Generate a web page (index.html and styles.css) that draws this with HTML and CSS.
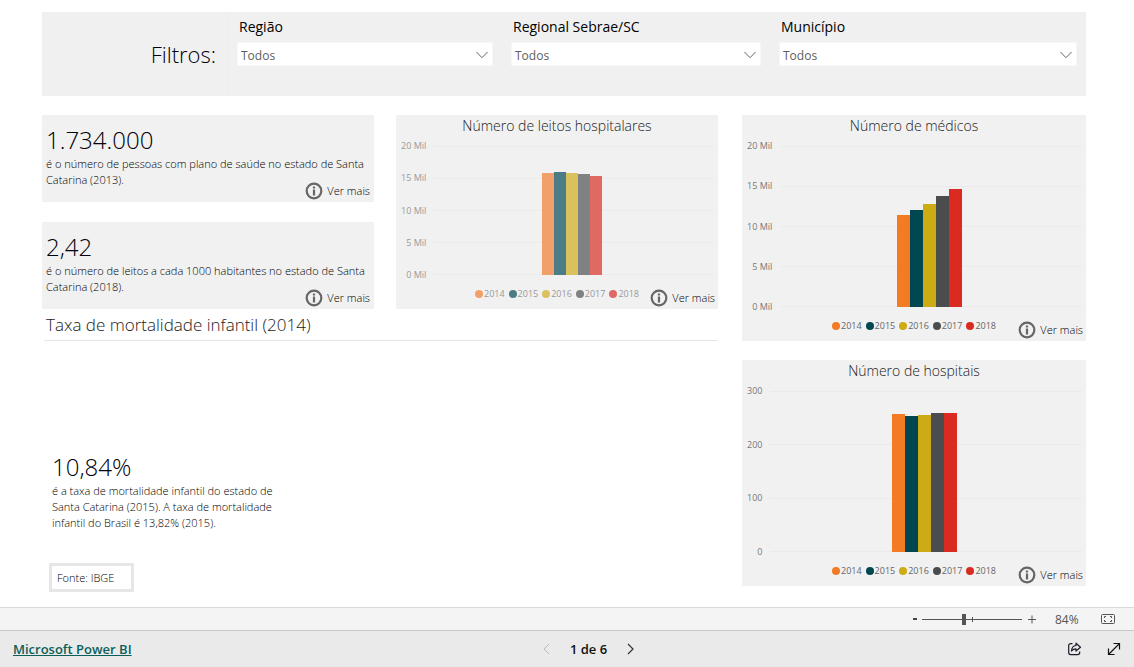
FILE: index.html
```html
<!DOCTYPE html>
<html lang="pt-BR">
<head>
<meta charset="utf-8">
<meta name="viewport" content="width=device-width, initial-scale=1">
<title>Saúde em Santa Catarina</title>
<link rel="stylesheet" href="styles.css">
</head>
<body>
<svg class="sprite" aria-hidden="true">
  <symbol id="info" viewBox="0 0 18 18">
    <circle cx="9" cy="9" r="7.3" fill="none" stroke="#666" stroke-width="2.2"/>
    <path d="M9 4.400v2M9 7.400v6" stroke="#666" stroke-width="2.2"/>
  </symbol>
  <symbol id="chevron" viewBox="0 0 14 8">
    <path d="M1.500 1l5.500 5.700L12.500 1" fill="none" stroke="currentColor"/>
  </symbol>
</svg>

<main class="report">
  <section class="filters">
    <h2 class="filters-title">Filtros:</h2>
    <div class="filters-list">
      <div class="filter">
        <label for="regiao">Região</label>
        <div class="select-box"><select id="regiao"><option>Todos</option></select><svg class="chevron"><use href="#chevron"/></svg></div>
      </div>
      <div class="filter">
        <label for="regional">Regional Sebrae/SC</label>
        <div class="select-box"><select id="regional"><option>Todos</option></select><svg class="chevron"><use href="#chevron"/></svg></div>
      </div>
      <div class="filter">
        <label for="municipio">Município</label>
        <div class="select-box"><select id="municipio"><option>Todos</option></select><svg class="chevron"><use href="#chevron"/></svg></div>
      </div>
    </div>
  </section>

  <div class="columns">
    <div class="column-main">
      <div class="top-row">
        <div class="kpis">
          <article class="card kpi">
            <p class="kpi-value">1.734.000</p>
            <p class="kpi-text">é o número de pessoas com plano de saúde no estado de Santa Catarina (2013).</p>
            <button class="more" type="button"><svg class="info"><use href="#info"/></svg>Ver mais</button>
          </article>
          <article class="card kpi">
            <p class="kpi-value">2,42</p>
            <p class="kpi-text">é o número de leitos a cada 1000 habitantes no estado de Santa Catarina (2018).</p>
            <button class="more" type="button"><svg class="info"><use href="#info"/></svg>Ver mais</button>
          </article>
        </div>

        <article class="card chart chart-muted">
          <h3 class="chart-title">Número de leitos hospitalares</h3>
          <div class="chart-body">
            <div class="axis"><span>20 Mil</span><span>15 Mil</span><span>10 Mil</span><span>5 Mil</span><span>0 Mil</span></div>
            <div class="plot">
              <div class="lines"><i></i><i></i><i></i><i></i><i></i></div>
              <div class="bars">
                <div class="bar y2014" style="height:79%"></div>
                <div class="bar y2015" style="height:80%"></div>
                <div class="bar y2016" style="height:79%"></div>
                <div class="bar y2017" style="height:78%"></div>
                <div class="bar y2018" style="height:77%"></div>
              </div>
            </div>
          </div>
          <div class="chart-foot">
            <ul class="legend"><li><i class="y2014"></i>2014</li><li><i class="y2015"></i>2015</li><li><i class="y2016"></i>2016</li><li><i class="y2017"></i>2017</li><li><i class="y2018"></i>2018</li></ul>
            <button class="more" type="button"><svg class="info"><use href="#info"/></svg>Ver mais</button>
          </div>
        </article>
      </div>

      <section class="mortality">
        <h2 class="mortality-title">Taxa de mortalidade infantil (2014)</h2>
        <div class="mortality-body">
          <p class="kpi-value">10,84%</p>
          <p class="kpi-text">é a taxa de mortalidade infantil do estado de Santa Catarina (2015). A taxa de mortalidade infantil do Brasil é 13,82% (2015).</p>
        </div>
        <p class="source">Fonte: IBGE</p>
      </section>
    </div>

    <div class="column-side">
      <article class="card chart">
        <h3 class="chart-title">Número de médicos</h3>
        <div class="chart-body">
          <div class="axis"><span>20 Mil</span><span>15 Mil</span><span>10 Mil</span><span>5 Mil</span><span>0 Mil</span></div>
          <div class="plot">
            <div class="lines"><i></i><i></i><i></i><i></i><i></i></div>
            <div class="bars">
              <div class="bar y2014" style="height:57%"></div>
              <div class="bar y2015" style="height:60.500%"></div>
              <div class="bar y2016" style="height:64%"></div>
              <div class="bar y2017" style="height:69%"></div>
              <div class="bar y2018" style="height:73%"></div>
            </div>
          </div>
        </div>
        <div class="chart-foot">
          <ul class="legend"><li><i class="y2014"></i>2014</li><li><i class="y2015"></i>2015</li><li><i class="y2016"></i>2016</li><li><i class="y2017"></i>2017</li><li><i class="y2018"></i>2018</li></ul>
          <button class="more" type="button"><svg class="info"><use href="#info"/></svg>Ver mais</button>
        </div>
      </article>

      <article class="card chart">
        <h3 class="chart-title">Número de hospitais</h3>
        <div class="chart-body">
          <div class="axis"><span>300</span><span>200</span><span>100</span><span>0</span></div>
          <div class="plot">
            <div class="lines"><i></i><i></i><i></i><i></i></div>
            <div class="bars">
              <div class="bar y2014" style="height:86%"></div>
              <div class="bar y2015" style="height:84.500%"></div>
              <div class="bar y2016" style="height:85%"></div>
              <div class="bar y2017" style="height:86.500%"></div>
              <div class="bar y2018" style="height:86.500%"></div>
            </div>
          </div>
        </div>
        <div class="chart-foot">
          <ul class="legend"><li><i class="y2014"></i>2014</li><li><i class="y2015"></i>2015</li><li><i class="y2016"></i>2016</li><li><i class="y2017"></i>2017</li><li><i class="y2018"></i>2018</li></ul>
          <button class="more" type="button"><svg class="info"><use href="#info"/></svg>Ver mais</button>
        </div>
      </article>
    </div>
  </div>
</main>

<div class="zoom-bar">
  <button class="icon-button" type="button" aria-label="Reduzir"><svg width="10" height="16" viewBox="0 0 10 16"><path d="M3 8h4" stroke="#444" stroke-width="2"/></svg></button>
  <input class="zoom-range" type="range" min="0" max="100" value="42" aria-label="Zoom">
  <button class="icon-button" type="button" aria-label="Ampliar"><svg width="20" height="16" viewBox="0 0 20 16"><path d="M6 8.500h8M10 4.500v8" stroke="#555" fill="none"/></svg></button>
  <span class="zoom-value">84%</span>
  <button class="icon-button" type="button" aria-label="Ajustar à página"><svg width="16" height="16" viewBox="0 0 16 16" fill="none" stroke="#555"><rect x="1.500" y="3.500" width="13" height="9" rx="1"/><path d="M6 5.500H4.500V7M10 5.500h1.500V7M6 10.500H4.500V9M10 10.500h1.500V9"/></svg></button>
</div>

<footer class="footer">
  <a class="brand" href="#">Microsoft Power BI</a>
  <nav class="pager" aria-label="Páginas">
    <button class="icon-button" type="button" aria-label="Página anterior" disabled><svg width="10" height="12" viewBox="0 0 10 12"><path d="M7 1L2 6l5 5" fill="none" stroke="#bbb"/></svg></button>
    <span>1 de 6</span>
    <button class="icon-button" type="button" aria-label="Próxima página"><svg width="10" height="12" viewBox="0 0 10 12"><path d="M3 1l5 5-5 5" fill="none" stroke="#333" stroke-width="1.200"/></svg></button>
  </nav>
  <div class="actions">
    <button class="icon-button" type="button" aria-label="Compartilhar"><svg width="16" height="16" viewBox="0 0 16 16" fill="none" stroke="#211a28" stroke-width="1.200"><path d="M6.500 2.600H4.700a2 2 0 0 0-2 2v7a2 2 0 0 0 2 2h7a2 2 0 0 0 2-2V10.500"/><path d="M10 2.200l4.500 4L10 10V7.900C8 7.900 6.700 8.500 5.500 10 5.700 6.800 7.300 4.700 10 4.500z" stroke-linejoin="round"/></svg></button>
    <button class="icon-button" type="button" aria-label="Tela cheia"><svg width="16" height="16" viewBox="0 0 16 16" fill="none" stroke="#111" stroke-width="1.200"><path d="M2.500 13.500l11-11M7.500 2.500h6v6M8.500 13.500h-6v-6"/></svg></button>
  </div>
</footer>
</body>
</html>
```
FILE: styles.css
```css
* {
  box-sizing: border-box;
}

body {
  margin: 0;
  min-height: 100vh;
  display: flex;
  flex-direction: column;
  background: #fff;
  color: #000;
  font-family: "Open Sans", "Noto Sans", sans-serif;
  font-size: 11px;
}

h2, h3, p, ul {
  margin: 0;
  padding: 0;
  font-weight: 300;
}

button {
  padding: 0;
  border: 0;
  background: none;
  color: inherit;
  font: inherit;
}

svg {
  display: block;
}

.sprite {
  position: absolute;
  width: 0;
  height: 0;
}

.report {
  flex: 1;
  padding: 12px 48px 21px 42px;
}

/* Filters */
.filters {
  display: grid;
  grid-template-columns: 186px 1fr;
  min-height: 84px;
  margin-bottom: 19px;
  background: #f0f0f0;
}

.filters-title {
  align-self: center;
  padding-right: 11px;
  border-right: 1px solid #ededed;
  color: #00000a;
  font-size: 22px;
  line-height: 84px;
  text-align: right;
}

.filters-list {
  display: grid;
  grid-template-columns: 256fr 250fr 298fr;
  gap: 18px;
  padding: 5px 9px 0;
}

.filter label {
  display: block;
  padding-left: 2px;
  color: #000;
  font-size: 14px;
  line-height: 20px;
}

.select-box {
  display: grid;
  align-items: center;
  margin-top: 5px;
  background: #fff;
}

.select-box > * {
  grid-area: 1 / 1;
}

.select-box select {
  appearance: none;
  width: 100%;
  height: 24px;
  padding: 3px 3px 0;
  border: 1px solid #f7f7f7;
  background: transparent;
  color: #605e5c;
  font: 400 12px "Open Sans", "Noto Sans", sans-serif;
}

.chevron {
  justify-self: end;
  width: 14px;
  height: 8px;
  margin: 2px 4px 0 0;
  color: #666;
  pointer-events: none;
}

/* Report grid */
.columns {
  display: grid;
  grid-template-columns: 676fr 344fr;
  gap: 24px;
}

.column-main, .column-side, .kpis {
  display: flex;
  flex-direction: column;
}

.column-side {
  gap: 19px;
}

.top-row {
  display: grid;
  grid-template-columns: 332fr 322fr;
  gap: 22px;
}

.kpis {
  gap: 20px;
}

.card {
  display: flex;
  flex-direction: column;
  background: #f1f1f1;
}

.kpi {
  height: 87px;
  padding: 9px 4px 2px;
}

.kpi-value {
  color: #00000a;
  font-size: 24px;
  line-height: 32px;
}

.kpi-text {
  font-size: 11px;
  line-height: 16px;
}

.kpi .kpi-text {
  height: 24px;
}

.more {
  display: flex;
  align-items: center;
  align-self: flex-end;
  gap: 4px;
  font-size: 11px;
  font-weight: 300;
  line-height: 18px;
  white-space: nowrap;
}

.kpi .more {
  margin-top: auto;
}

.info {
  width: 18px;
  height: 18px;
}

/* Charts */
.chart-title {
  color: #1a1a1a;
  font-size: 14px;
  line-height: 22px;
  text-align: center;
}

.chart-body {
  display: grid;
  grid-template-columns: auto 1fr;
  gap: 8px;
  height: 139px;
  margin-top: 4px;
  padding: 0 4px 0 5px;
}

.column-side .chart-body {
  height: 171px;
}

.axis {
  display: flex;
  flex-direction: column;
  justify-content: space-between;
  color: #777;
  font-size: 9px;
  line-height: 10px;
  text-align: right;
}

.plot {
  display: grid;
  margin: 5px 0;
}

.lines, .bars {
  grid-area: 1 / 1;
}

.lines {
  display: flex;
  flex-direction: column;
  justify-content: space-between;
}

.lines i {
  height: 1px;
  background: #eaeaea;
}

.bars {
  display: flex;
  justify-content: center;
  align-items: flex-end;
  padding-right: 4px;
}

.bar {
  width: 13px;
}

.chart-muted .bar {
  width: 12px;
}

.chart-foot {
  display: grid;
  grid-template-columns: 1fr auto 1fr;
  padding: 7px 3px 2px;
}

.legend {
  grid-column: 2;
  align-self: start;
  display: flex;
  gap: 4px;
  color: #666;
  font-size: 9px;
  font-weight: 400;
  line-height: 14px;
  list-style: none;
}

.legend li {
  display: flex;
  align-items: center;
  gap: 1px;
}

.legend i {
  width: 8px;
  height: 8px;
  border-radius: 50%;
}

.chart-foot .more {
  justify-self: end;
  margin-top: 2px;
}

.chart-muted .axis, .chart-muted .legend {
  color: #999;
}

.y2014 { background: #f37b24; }
.y2015 { background: #014751; }
.y2016 { background: #ccab14; }
.y2017 { background: #4b4c4e; }
.y2018 { background: #d92b20; }

.chart-muted .y2014 { background: #f2a069; }
.chart-muted .y2015 { background: #4c7d86; }
.chart-muted .y2016 { background: #d9c25c; }
.chart-muted .y2017 { background: #808183; }
.chart-muted .y2018 { background: #e06a63; }

/* Child mortality */
.mortality {
  display: flex;
  flex-direction: column;
  flex: 1;
}

.mortality-title {
  margin-left: 2px;
  padding: 4px 2px;
  border-bottom: 1px solid #e6e6e6;
  color: #1a1a1a;
  font-size: 17px;
  line-height: 23px;
}

.mortality-body {
  width: 240px;
  margin-top: auto;
  padding-left: 10px;
}

.source {
  align-self: flex-start;
  width: 85px;
  margin: 32px 0 -6px 7px;
  padding: 3px 5px;
  border: 3px solid #e6e6e6;
  line-height: 17px;
}

/* Zoom bar and footer */
.zoom-bar {
  display: flex;
  align-items: center;
  justify-content: flex-end;
  height: 23px;
  padding-right: 18px;
  border-top: 1px solid #dadada;
  background: #f4f4f4;
}

.zoom-range {
  appearance: none;
  width: 100px;
  height: 16px;
  margin: 0 0 0 2px;
  background:
    linear-gradient(#555, #555) 50px 50% / 1px 5px no-repeat,
    linear-gradient(#555, #555) 0 50% / 100% 1px no-repeat;
}

.zoom-range::-webkit-slider-thumb {
  appearance: none;
  width: 4px;
  height: 11px;
  background: #555;
}

.zoom-value {
  width: 58px;
  padding-left: 13px;
  color: #555;
  font-size: 12px;
}

.footer {
  display: grid;
  grid-template-columns: 1fr auto 1fr;
  align-items: center;
  height: 37px;
  padding: 0 12px 0 13px;
  border-top: 1px solid #c8c8c8;
  background: #eaeaea;
}

.brand {
  color: #0b5f5a;
  font-size: 13px;
  font-weight: 600;
  justify-self: start;
}

.pager {
  display: flex;
  align-items: center;
  gap: 18px;
  padding-left: 42px;
  color: #111;
  font-size: 13px;
  font-weight: 600;
}

.actions {
  display: flex;
  justify-content: flex-end;
  gap: 24px;
}
```
